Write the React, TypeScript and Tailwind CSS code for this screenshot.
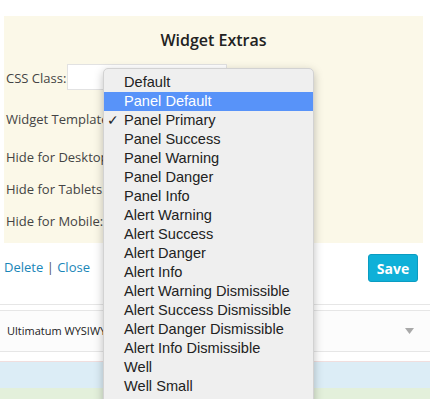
import React from "react";

const items = [
  "Default",
  "Panel Default",
  "Panel Primary",
  "Panel Success",
  "Panel Warning",
  "Panel Danger",
  "Panel Info",
  "Alert Warning",
  "Alert Success",
  "Alert Danger",
  "Alert Info",
  "Alert Warning Dismissible",
  "Alert Success Dismissible",
  "Alert Danger Dismissible",
  "Alert Info Dismissible",
  "Well",
  "Well Small",
];

export default function App() {
  return (
    <div
      className="relative w-[430px] h-[399px] overflow-hidden bg-white text-[13px] text-[#444]"
      style={{ fontFamily: '"Open Sans", sans-serif' }}
    >
      <div className="pt-[16px]">
        <div className="ml-[4px] w-[419px] h-[227px] bg-[#fbf8e8] px-[2px]">
          <div className="pt-[14px] h-[34px] leading-[20px] text-center text-[16px] font-semibold text-[#222]">
            Widget Extras
          </div>
          <div className="mt-[14px] flex h-[26px] items-center">
            <span className="pt-[3px]">CSS Class:</span>
            <div className="ml-[1px] h-[26px] w-[160px] bg-white border border-[#e2e2e2]" />
          </div>
          <div className="mt-[19px] h-[20px] leading-[20px]">Widget Template:</div>
          <div className="mt-[18px] h-[20px] leading-[20px]">Hide for Desktop:</div>
          <div className="mt-[12px] h-[20px] leading-[20px]">Hide for Tablets:</div>
          <div className="mt-[12px] h-[20px] leading-[20px]">Hide for Mobile:</div>
        </div>
        <div className="mt-[11px] flex h-[28px] items-center justify-between pl-[4px] pr-[12px]">
          <div className="text-[#1a86b8]">
            Delete <span className="text-[#555]">|</span> Close
          </div>
          <div className="flex h-[28px] w-[50px] items-center justify-center rounded-[3px] bg-[#0fb0d8] border border-[#0a9cc2] text-[14px] font-bold text-white">
            Save
          </div>
        </div>
        <div className="mt-[22px] h-[1px] bg-[#e6e6e6]" />
        <div className="mt-[5px] h-[42px] border-y border-[#e6e6e6] bg-[#fcfcfc] flex items-center justify-between pl-[7px] pr-[16px]">
          <span className="text-[11px] text-[#222]">Ultimatum WYSIWYG Editor</span>
          <svg width="9" height="6" viewBox="0 0 9 6">
            <path d="M0 0 L9 0 L4.5 6 Z" fill="#a9a9a9" />
          </svg>
        </div>
        <div className="mt-[9px] h-[1px] bg-[#f0dede]" />
        <div className="h-[26px] bg-[#dcedf6]" />
        <div className="h-[20px] bg-[#e3f0db]" />
      </div>

      <div
        className="absolute left-[103px] top-[68px] w-[211px] h-[340px] rounded-t-[5px] bg-[#efefef] border border-[#d2d2d2] shadow-[0_3px_10px_rgba(0,0,0,0.25)] pt-[4px] text-[14.6px] text-[#222]"
        style={{ fontFamily: '"Liberation Sans", Arial, sans-serif' }}
      >
        {items.map((it, i) => (
          <div
            key={it}
            className={
              "relative h-[19px] leading-[19px] pl-[20px] " +
              (i === 1 ? "bg-[#5893f9] text-white" : "")
            }
          >
            {i === 2 && (
              <span className="absolute left-[3px] top-0 text-[14px]">✓</span>
            )}
            {it}
          </div>
        ))}
      </div>
    </div>
  );
}
